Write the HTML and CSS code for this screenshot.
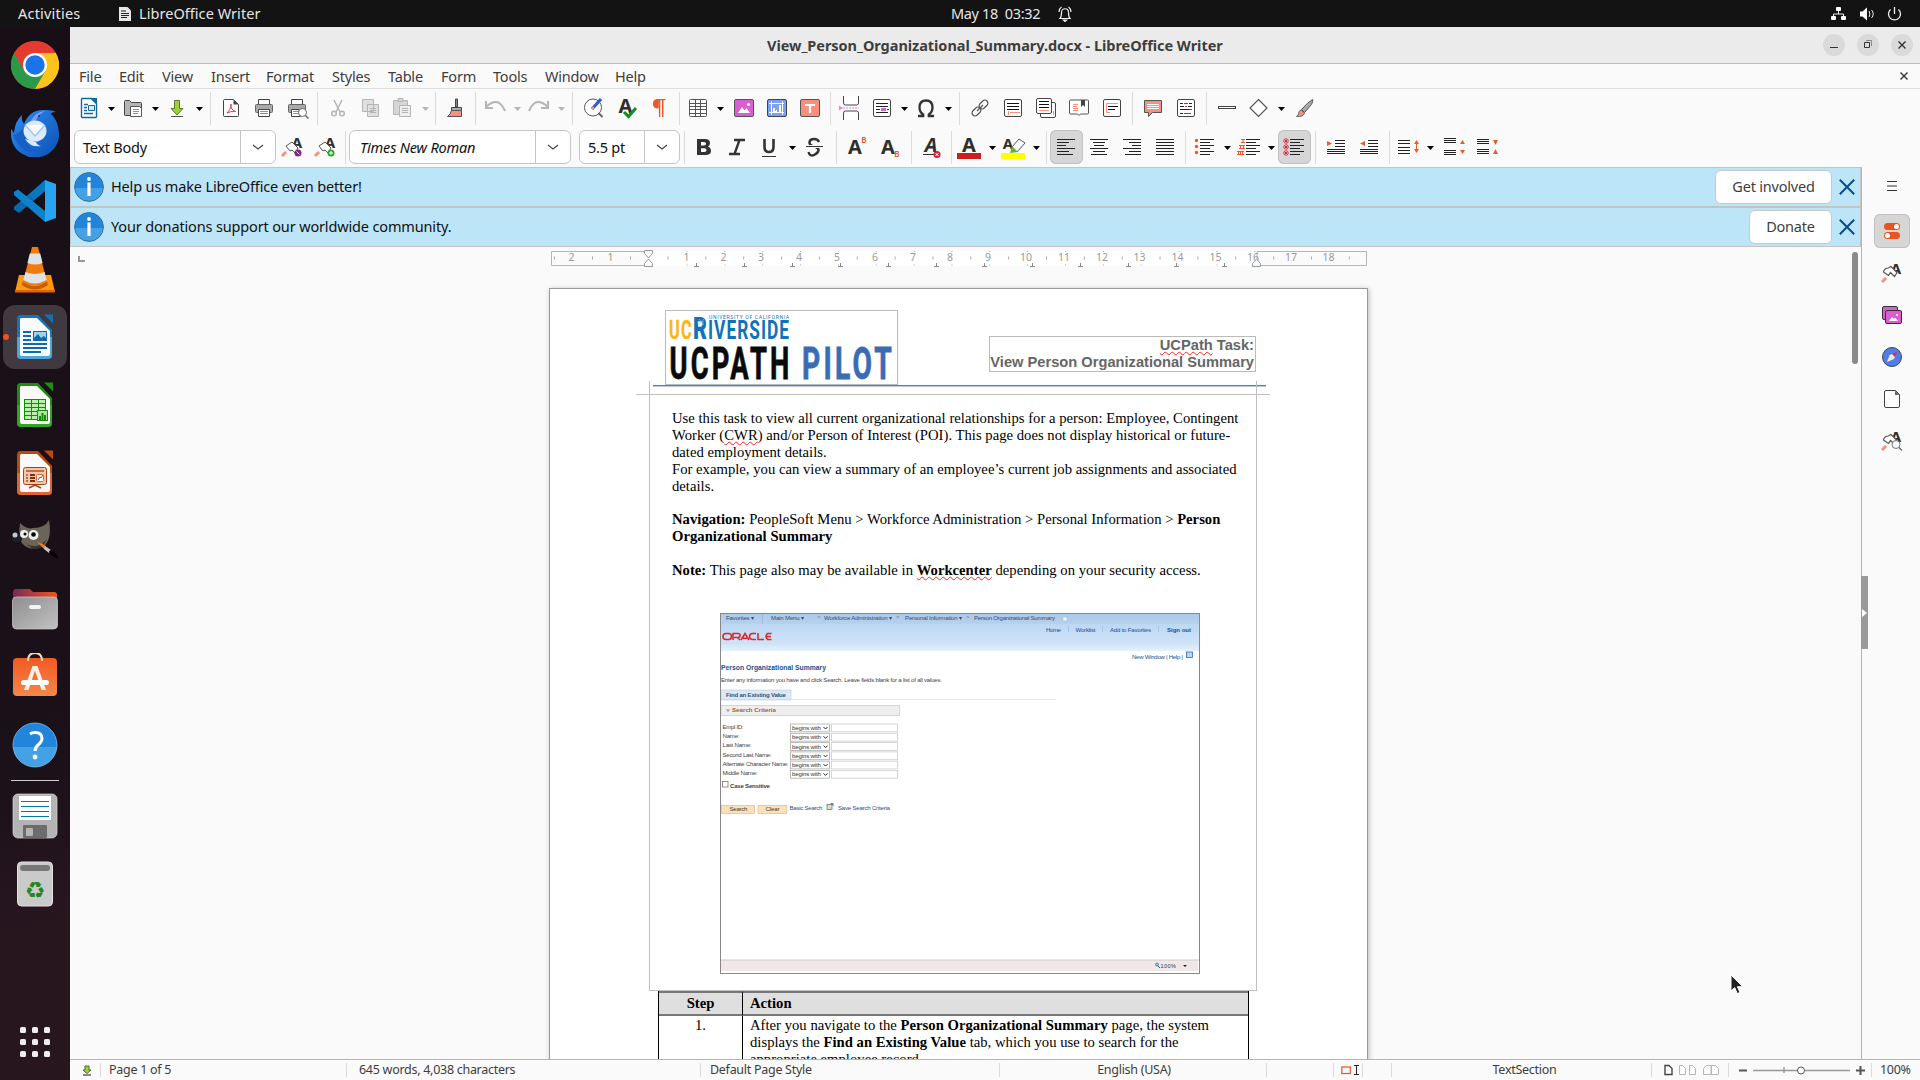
FILE: index.html
```html
<!DOCTYPE html>
<html lang="en">
<head>
<meta charset="utf-8">
<title>View_Person_Organizational_Summary.docx - LibreOffice Writer</title>
<link rel="stylesheet" href="styles.css">
</head>
<body>
<header class="topbar">
  <span class="activities">Activities</span>
  <svg class="app-glyph" width="12" height="14" viewBox="0 0 12 14"><path d="M0 0h8.500l3.500 3.500V14H0z" fill="#e8e8e8"/><path d="M2 4h5M2 6.500h8M2 8.500h8M2 10.500h6" stroke="#222" stroke-width="1"/></svg>
  <span class="appname">LibreOffice Writer</span>
  <span class="clock">May 18&nbsp; 03:32</span>
  <svg class="bell" width="14" height="16" viewBox="0 0 14 16" fill="none" stroke="#eee" stroke-width="1.200"><path d="M2 12.500c1.500-1.500 1.500-3 1.500-6 0-5 7-5 7 0 0 3 0 4.500 1.500 6zM1 6q.2-3.500 2.500-5M13 6Q12.800 2.500 10.500 1"/><path d="M5.500 14h3l-1.500 1.500z" fill="#fff"/></svg>
  <svg class="tray" width="74" height="16" viewBox="0 0 74 16"><g fill="#fff"><rect x="5" y="1" width="5" height="4" rx="1"/><rect x="0" y="10" width="5" height="4" rx="1"/><rect x="10" y="10" width="5" height="4" rx="1"/><path d="M29 5.500h2.500L36 1.500v13l-4.500-4H29z"/></g><path d="M7.500 5v3M2.500 10V8h10v2M38 5q2 3 0 6M40.500 4q3.500 4 0 8" fill="none" stroke="#eee"/><path d="M59.500 3.500a6 6 0 1 0 8 0M63.500 1v7" fill="none" stroke="#eee" stroke-width="1.300"/></svg>
</header>
<div class="desktop">
<nav class="dock">
  <div class="app"><svg viewBox="0 0 48 48"><circle cx="24" cy="24" r="24" fill="#e33b2e"/><path d="M3.200 12A24 24 0 0 0 24 48L34.500 30 24 24 13.500 30z" fill="#2a9a48"/><path d="M24 48A24 24 0 0 0 44.800 12H24L34.500 30z" fill="#fcc31c"/><path d="M3.200 12 13.500 30 24 24 24 12H44.800A24 24 0 0 0 3.200 12z" fill="#e33b2e"/><circle cx="24" cy="24" r="12" fill="#fff"/><circle cx="24" cy="24" r="9.700" fill="#1a73e8"/></svg></div>
  <div class="app"><svg viewBox="0 0 48 48"><defs><linearGradient id="tb" x1="0" y1="0" x2="1" y2="1"><stop offset="0" stop-color="#2f8df0"/><stop offset="1" stop-color="#0b50b4"/></linearGradient></defs><path d="M0 20l3 4Q4 12 11 6q-1 6 2 9Q19 0 33 1q8-.5 12 2-5 0-5 2 7 6 8 19a24 23 0 0 1-48 3z" fill="url(#tb)"/><path d="M20 12Q24 3 34 2q-6 3-9 9l-6 4z" fill="#7f9cf5"/><path d="M2 26q6-1 12-9l4-3q-6 10-3 18t14 11Q10 46 2 26z" fill="#1560c8"/><ellipse cx="24" cy="22" rx="11.500" ry="10.500" fill="#dceafd"/><path d="M14 16l10 11 10-11" fill="#f6faff" stroke="#9ec7f5" stroke-width="1.500"/><path d="M14 30q6 9 16 7-4-1-5-4z" fill="#d7eaff"/><circle cx="28" cy="7" r="1" fill="#0b3b80"/></svg></div>
  <div class="app"><svg viewBox="0 0 48 48"><path d="M34 3v11L8 36l-5-3.500V30z" fill="#0a6ab0"/><path d="M3 15l4-2.500L34 34v11L3 18z" fill="#0f80cc"/><path d="M34 3l11 4v34l-11 4z" fill="#27a5f2"/><path d="M34 3v11l-11 9-5-5z" fill="#0877bd"/></svg></div>
  <div class="app"><svg viewBox="0 0 48 48"><path d="M8 30h32l4 17H4z" fill="#ff9a0c"/><path d="M4 45h40v2.500H4z" fill="#e06500"/><path d="M12 36q12 10 24 0l1 4q-13 9-26 0z" fill="#c85c00"/><path d="M21 2h6l9 35q-12 7-24 0z" fill="#f07c0c"/><path d="M18.800 8.500h10.400l2.400 9.500q-7.600 3-15.200 0zM14.500 27q9.500 4 19 0l2.200 8q-11.700 7-23.400 0z" fill="#dfe3e6"/></svg></div>
  <div class="app active"><svg viewBox="0 0 48 48"><path d="M9.500 2H27l14 15v25a4 4 0 0 1-4 4H10a4 4 0 0 1-4-4V6q0-4 3.500-4z" fill="#1874b6"/><path d="M6 24h35v18a4 4 0 0 1-4 4H10a4 4 0 0 1-4-4z" fill="#4ba8da"/><path d="M10 5h16l13 13v23q0 2-2 2H11q-2 0-2-2V6z" fill="#fafafa"/><path d="M33 1.500h9v9z" fill="#1170ad"/><path d="M12 19h8M12 23h8M12 27h8M12 31h24M12 35h24M12 39h18" stroke="#0a6ab4" stroke-width="2"/><rect x="22.500" y="18.500" width="13" height="9" fill="#9ed2f2" stroke="#0a6ab4"/><path d="M23 27v-2l4-4 3 4 3-2 2 2v2z" fill="#0a6ab4"/></svg></div>
  <div class="app"><svg viewBox="0 0 48 48"><path d="M9.500 2H27l14 15v25a4 4 0 0 1-4 4H10a4 4 0 0 1-4-4V6q0-4 3.500-4z" fill="#238a16"/><path d="M6 24h35v18a4 4 0 0 1-4 4H10a4 4 0 0 1-4-4z" fill="#34a522"/><path d="M10 5h16l13 13v23q0 2-2 2H11q-2 0-2-2V6z" fill="#fafafa"/><path d="M33 1.500h9v9z" fill="#238a16"/><rect x="13.500" y="18.500" width="21" height="20" fill="#b8efad" stroke="#168a0c"/><path d="M13 22.500h22M13 26.500h22M13 30.500h22M13 34.500h22M20.500 18v21M27.500 18v21" stroke="#168a0c"/><rect x="26.500" y="29.500" width="10" height="10" fill="#a8e79c" stroke="#168a0c"/><path d="M29 39v-4M31.500 39v-7M34 39v-5" stroke="#168a0c" stroke-width="2"/></svg></div>
  <div class="app"><svg viewBox="0 0 48 48"><path d="M9.500 2H27l14 15v25a4 4 0 0 1-4 4H10a4 4 0 0 1-4-4V6q0-4 3.500-4z" fill="#b94a10"/><path d="M6 24h35v18a4 4 0 0 1-4 4H10a4 4 0 0 1-4-4z" fill="#e0672c"/><path d="M10 5h16l13 13v23q0 2-2 2H11q-2 0-2-2V6z" fill="#fafafa"/><path d="M33 1.500h9v9z" fill="#b94a10"/><rect x="12.500" y="18.500" width="23" height="17" rx="2" fill="#edc9b5" stroke="#a84412"/><path d="M15 22h18" stroke="#d8672c" stroke-width="2"/><path d="M19 26h5M19 29h5M19 32h5" stroke="#7b2d06" stroke-width="2"/><path d="M15 26h2M15 29h2M15 32h2" stroke="#d8672c" stroke-width="2"/><rect x="25.500" y="25.500" width="7" height="7" rx="1" fill="#fff" stroke="#e0672c"/><path d="M27 31l2-3 1 1 2-3" fill="none" stroke="#a84412"/><path d="M18 39l6-3 6 3" fill="none" stroke="#a84412" stroke-width="1.500"/></svg></div>
  <div class="app"><svg viewBox="0 0 48 48"><path d="M9 6q7 7 13 5Q34 11 38 3q3 18-4 25-7 5-16 3-9-3-10-13z" fill="#6b6559"/><path d="M14 26q12 8 22-4-4 10-14 10z" fill="#37342e"/><ellipse cx="5.500" cy="20.500" rx="5.500" ry="6" fill="#1c2024" stroke="#000" stroke-width=".5"/><circle cx="4" cy="18" r="2.500" fill="#c2c8cc"/><circle cx="13" cy="17" r="4" fill="#eee"/><circle cx="22.500" cy="18" r="5" fill="#eee"/><circle cx="14" cy="17" r="1.500"/><circle cx="22.500" cy="17.500" r="2.300"/><path d="M26 25q5 1 9 4l-2 3z" fill="#e18120"/><path d="M34 29l6 4-2 3-5-4z" fill="#c6c6c6"/><path d="M39 33q6 2 8 8-7-1-9-6z" fill="#000"/></svg></div>
  <div class="app"><svg viewBox="0 0 48 48"><defs><linearGradient id="fo"><stop offset="0" stop-color="#7b2a57"/><stop offset="1" stop-color="#ed5622"/></linearGradient><linearGradient id="gr" x1="0" y1="0" x2="1" y2="1"><stop offset="0" stop-color="#8e8e8e"/><stop offset="1" stop-color="#c2c2c2"/></linearGradient></defs><path d="M2 8q0-4 3-4h14l3 3h21q3 0 3 3v12H2z" fill="url(#fo)"/><rect x="1.500" y="12" width="45" height="32" rx="4" fill="url(#gr)" stroke="#d0d0d0" stroke-width=".7"/><rect x="18" y="20" width="12" height="4" rx="2" fill="#f4f4f4"/></svg></div>
  <div class="app"><svg viewBox="0 0 48 48"><defs><linearGradient id="so" x1="0" y1="0" x2="0" y2="1"><stop offset="0" stop-color="#f15a22"/><stop offset="1" stop-color="#f5874a"/></linearGradient></defs><rect x="2" y="5" width="44" height="38" rx="4" fill="url(#so)"/><path d="M17 8q0-8 7-8t7 8" fill="none" stroke="#f7dfba" stroke-width="2"/><path d="M13 37l8.500-24h5L35 37h-4.500L24 17.500 17.500 37z" fill="#fff0e6"/><rect x="10" y="27" width="28" height="5" rx="2.500" fill="#fff"/></svg></div>
  <div class="app"><svg viewBox="0 0 48 48"><defs><linearGradient id="he" x1="0" y1="0" x2="0" y2="1"><stop offset=".54" stop-color="#2285dc"/><stop offset=".55" stop-color="#43a2e6"/></linearGradient></defs><circle cx="24" cy="24" r="22" fill="url(#he)" stroke="#7fc0ee" stroke-width=".8"/><path d="M19 13q2-1.500 5-1.500 7 0 7 6 0 3-4 6.500-3 2.500-3 6" fill="none" stroke="#fff" stroke-width="3"/><circle cx="24" cy="36" r="2.400" fill="#fff"/></svg></div>
  <div class="dock-line"></div>
  <div class="app"><svg viewBox="0 0 48 48"><rect x="2" y="2" width="44" height="44" rx="5" fill="#b4b4b4" stroke="#d8d8d8" stroke-width=".7"/><path d="M8 4h32v24H8z" fill="#fff"/><path d="M10 9.500h28M10 14.500h28M10 19.500h28M10 24.500h28" stroke="#007aa0"/><rect x="12" y="33" width="24" height="13" rx="1" fill="#6c6c6c"/><rect x="15" y="36" width="7" height="8" rx="1" fill="#b5b5b5"/></svg></div>
  <div class="app"><svg viewBox="0 0 48 48"><rect x="6.500" y="2" width="35" height="44" rx="4" fill="#cacaca" stroke="#e2e2e2"/><rect x="9" y="5" width="30" height="6" rx="3" fill="#777"/><text x="24" y="38" font-size="23" text-anchor="middle" fill="#25861c" font-family="DejaVu Sans">♻</text></svg></div>
  <div class="apps-grid"><i></i><i></i><i></i><i></i><i></i><i></i><i></i><i></i><i></i></div>
</nav>
<main class="window">
  <div class="titlebar">
    <span class="title">View_Person_Organizational_Summary.docx - LibreOffice Writer</span>
    <div class="winbtns">
      <svg viewBox="0 0 22 22"><path d="M7 13.500h8" stroke="#333" fill="none"/></svg>
      <svg viewBox="0 0 22 22"><path d="M7.500 8.500h5v5h-5z" stroke="#333" fill="none"/><path d="M9 6.500h5.500V12" stroke="#888" fill="none"/></svg>
      <svg viewBox="0 0 22 22"><path d="M7.500 7.500l7 7M14.500 7.500l-7 7" stroke="#333" fill="none" stroke-width="1.400"/></svg>
    </div>
  </div>
  <div class="menubar"><span>File</span><span>Edit</span><span>View</span><span>Insert</span><span>Format</span><span>Styles</span><span>Table</span><span>Form</span><span>Tools</span><span>Window</span><span>Help</span>
    <svg class="closedoc" width="8" height="8" viewBox="0 0 8 8"><path d="M.5.5l7 7M7.500.5l-7 7" stroke="#333" stroke-width="1.400"/></svg></div>
  <div class="toolbar one">
    <span class="b"><svg><path d="M4.500 3.500q0-1 1-1h9l5 5v13q0 1-1 1h-13q-1 0-1-1z" fill="#fff" stroke="#0f68a0" stroke-width="1.400"/><path d="M13 2h7v7z" fill="#0f68a0"/><path d="M7 8.500h4M7 11.500h3M7 14.500h3M7 17.500h9" stroke="#0f68a0" stroke-width="1.300"/><path d="M11.500 9.500h6v5h-6z" fill="#d5eaf8" stroke="#0f68a0"/></svg></span><i class="d"></i>
    <span class="b"><svg><path d="M3.500 19V5.500q0-1 1-1h4l2 2h9q1 0 1 1V19q0 .500-1 .500h-15q-1 0-1-.500z" fill="#b5b5b5" stroke="#444"/><path d="M9.500 10.500h9l2 2v8h-11z" fill="#fff" stroke="#555"/><path d="M12 13.500h6M12 15.500h6M12 17.500h5" stroke="#8a88e0"/></svg></span><i class="d"></i>
    <span class="b"><svg><path d="M9.500 4.500h5v8h3.500L12 19l-6-6.500h3.500z" fill="#9cd13a" stroke="#5d7a2e"/><path d="M6 20.500h12" stroke="#555"/></svg></span><i class="d"></i>
    <i class="s s10"></i>
    <span class="b"><svg><path d="M4.500 4.500q0-1 1-1h9l5 5v11q0 1-1 1h-13q-1 0-1-1z" fill="#fff" stroke="#444"/><path d="M14.500 3.500l5 5h-5z" fill="#444"/><path d="M8 17q4-3 4-9-.500 6 4.500 7.500-5-.500-8.500 1.500z" fill="none" stroke="#e03a5c"/></svg></span>
    <span class="b"><svg><path d="M6.500 8V3.500h11V8" fill="#fff" stroke="#444"/><rect x="3.500" y="8.500" width="17" height="8" rx="1" fill="#aaa" stroke="#666"/><path d="M6.500 13.500h11v7h-11z" fill="#fff" stroke="#444"/><path d="M8 15.500h8M8 17.500h8" stroke="#8a88e0"/></svg></span>
    <span class="b"><svg><path d="M6.500 8V3.500h11V8" fill="#fff" stroke="#444"/><rect x="3.500" y="8.500" width="17" height="8" rx="1" fill="#aaa" stroke="#666"/><path d="M6.500 13.500h9v7h-9z" fill="#fff" stroke="#444"/><path d="M8 15.500h7M8 17.500h7" stroke="#8a88e0"/><circle cx="17.500" cy="16.500" r="4" fill="#fff" stroke="#666"/><path d="M20.500 19.500l3 3" stroke="#666" stroke-width="1.500"/></svg></span>
    <i class="s s7"></i>
    <span class="b"><svg fill="none" stroke="#b5b5b5" stroke-width="1.500"><path d="M9 4l6 12M17 4l-6 12"/><circle cx="9" cy="17.500" r="2.300"/><circle cx="17" cy="17.500" r="2.300"/></svg></span>
    <span class="b"><svg fill="#e0e0e0" stroke="#b5b5b5"><path d="M4.500 3.500h11v12h-11zM9.500 8.500h11v12h-11z"/><path d="M12 12.500h6M12 14.500h6M12 16.500h6"/></svg></span>
    <span class="b"><svg fill="#d5d5d5" stroke="#b5b5b5"><path d="M2.500 4.500h14v14h-14z"/><path d="M7 2.500h5v3H7z"/><path fill="#eee" d="M8.500 9.500h11v11h-11z"/><path d="M11 12.500h6M11 14.500h6M11 16.500h6"/></svg></span><i class="d off"></i>
    <i class="s s8"></i>
    <span class="b"><svg><path d="M12.500 3h2v8h-2z" fill="#888" stroke="#444"/><path d="M8.500 11.500h10v3h-10z" fill="#aaa" stroke="#444"/><path d="M8.500 14.500h10v6h-14q3-2 4-6z" fill="#fa9080" stroke="#555"/></svg></span>
    <i class="s s7"></i>
    <span class="b"><svg fill="none" stroke="#b5b5b5" stroke-width="2"><path d="M3 5v7h7"/><path d="M3 11q5-5 10-5t9 9"/></svg></span><i class="d off"></i>
    <span class="b"><svg fill="none" stroke="#b5b5b5" stroke-width="2"><path d="M21 5v7h-7"/><path d="M21 11q-5-5-10-5T2 15"/></svg></span><i class="d off"></i>
    <i class="s s10"></i>
    <span class="b"><svg fill="none"><circle cx="12" cy="11.500" r="8.500" stroke="#555" fill="#fff"/><path d="M17.500 17l4 4" stroke="#666" stroke-width="2"/><path d="M20 3l-9 10" stroke="#2b5cd8" stroke-width="3.200"/><path d="M11 13l1.500-2" stroke="#f0a060" stroke-width="2.500"/></svg></span>
    <span class="b"><svg><text x="11.500" y="16.500" class="gl" font-size="20">A</text><path d="M10 16l4.500 4.500L22 12" fill="none" stroke="#158a28" stroke-width="3"/></svg></span>
    <span class="b"><svg><path d="M11.500 3v9.500h-1.500a4.800 4.800 0 0 1 0-9.500h8.500v1.200h-2V21H15V4.200h-1.700V21h-1.300z" fill="#ea5b2c"/></svg></span>
    <i class="s s6"></i>
    <span class="b"><svg fill="#fff" stroke="#555"><rect x="3.500" y="3.500" width="17" height="17" rx="1"/><path d="M3 7.500h18M3 10.500h18M3 13.500h18M3 17.500h18M9.500 3v18M14.500 3v18"/></svg></span><i class="d d13"></i>
    <span class="b"><svg><rect x="2.500" y="3.500" width="19" height="17" rx="1.500" fill="#d95fd0" stroke="#555"/><path d="M6 17l4-6 2.500 3.500L14.500 12l3.500 5z" fill="#fff"/><circle cx="16.500" cy="8.500" r="1.600" fill="#fff"/></svg></span>
    <span class="b"><svg><rect x="2.500" y="3.500" width="19" height="17" rx="1.500" fill="#7ca0f5" stroke="#444"/><path d="M6.500 5.500v13M4 16.500h15M4 7.500h15M17.500 5.500v13" stroke="#fff" fill="none"/><path d="M8 16v-4h2v3h1v-1h1v2M14 16V9h2v7" fill="#fff"/></svg></span>
    <span class="b"><svg><rect x="2.500" y="3.500" width="19" height="17" rx="1.500" fill="#fb8f7c" stroke="#555"/><path d="M7 9h10M12 9v8" stroke="#fff" stroke-width="2.200"/></svg></span>
    <i class="s s6"></i>
    <span class="b"><svg fill="#fff" stroke="#444"><path d="M6.500 0v7q0 2 2 2h11q2 0 2-2V0M6.500 24v-7q0-2 2-2h11q2 0 2 2v7"/><path d="M6 12h16" stroke="#f080c8" stroke-dasharray="2 1"/><path d="M2 9.500v5l4-2.500z" fill="#f080c8" stroke="none"/></svg></span>
    <span class="b"><svg><rect x="3.500" y="3.500" width="17" height="17" rx="1.500" fill="#fff" stroke="#444"/><path d="M6 7.500h12M6 10.500h12M6 13.500h4M17 13.500h2M6 16.500h12" stroke="#222"/><path d="M11 12h5v3h-5z" fill="#d95fd0"/></svg></span><i class="d"></i>
    <span class="b"><svg><path d="M4 20h5.200v-1.500Q5.500 16 5.500 11.500 5.500 4.500 12 4.500t6.500 7q0 4.500-3.700 7V20H20" fill="none" stroke="#333" stroke-width="2.300"/></svg></span><i class="d"></i>
    <i class="s s10"></i>
    <span class="b"><svg fill="none" stroke="#555" stroke-width="1.200"><rect x="-5" y="-3" width="10" height="6" rx="3" transform="translate(8.500 15.500) rotate(-45)"/><rect x="-5" y="-3" width="10" height="6" rx="3" transform="translate(15.500 8.500) rotate(-45)"/><path d="M9 15l6-6"/></svg></span>
    <span class="b"><svg><rect x="3.500" y="3.500" width="17" height="17" rx="1.500" fill="#fff" stroke="#444"/><path d="M6 7.500h12M6 10.500h12M6 13.500h12" stroke="#111"/><path d="M9 16.500h10M7.500 15v4" stroke="#fb8f7c"/></svg></span>
    <span class="b"><svg><rect x="6.500" y="6.500" width="15" height="15" rx="1.500" fill="#fff" stroke="#444"/><rect x="2.500" y="2.500" width="15" height="15" rx="1.500" fill="#fff" stroke="#444"/><path d="M5 5.500h10M5 8.500h10M5 11.500h10" stroke="#111"/><path d="M5 14.500h10M19.500 15v4" stroke="#fb8f7c"/></svg></span>
    <span class="b"><svg><path d="M2.500 5q0-1 1-1h17q1 0 1 1v12q0 1-1 1h-7L12 19.500 10.500 18h-7q-1 0-1-1z" fill="#fff" stroke="#555"/><path d="M14 4h4v7l-2-2-2 2z" fill="#444"/><path d="M6 8.500h5M6 10.500h4M6 12.500h5M6 14.500h5" stroke="#fb8f7c"/></svg></span>
    <span class="b"><svg><rect x="3.500" y="3.500" width="17" height="17" rx="1.500" fill="#fff" stroke="#444"/><path d="M8 10.500h10M8 13.500h7" stroke="#111"/><path d="M18 7.500H6.500v9H10" fill="none" stroke="#fb8f7c"/></svg></span>
    <i class="s s7"></i>
    <span class="b"><svg><path d="M4.500 4.500h17v12h-9l-4 4v-4h-4z" fill="#fb8f7c" stroke="#555"/><path d="M7 8.500h12M7 10.500h12M7 12.500h12" stroke="#fff"/></svg></span>
    <span class="b"><svg><rect x="4.500" y="3.500" width="17" height="17" rx="1.500" fill="#fff" stroke="#444"/><path d="M7 7.500h3M16 7.500h3M7 10.500h4M15 10.500h4M7 13.500h9M7 17.500h3" stroke="#222"/><path d="M11 7.500h4M12 10.500h2M16 13.500h3M11 17.500h7" stroke="#d42040"/></svg></span>
    <i class="s s8"></i>
    <span class="b"><svg><rect x="4.500" y="10.500" width="17" height="2" fill="#fff" stroke="#444"/></svg></span>
    <span class="b"><svg><path d="M11.500 3.500l8.500 8.500-8.500 8.500L3 12z" fill="#fff" stroke="#555" stroke-width="1.200"/></svg></span><i class="d"></i>
    <span class="b"><svg><path d="M21.500 3.500q1 1-1 5l-7 8-3-3q6-7 11-10z" fill="#aaa" stroke="#555"/><path d="M10 14l3.500 3q-1 4-8 3.500 2-1 2-3 .500-3 2.500-3.500z" fill="#fb8f7c" stroke="#666"/></svg></span>
  </div>
  <div class="toolbar two">
    <div class="combo c1"><span>Text Body</span><b><svg viewBox="0 0 12 6"><path d="M1 1l5 4 5-4"/></svg></b></div>
    <span class="b"><svg><text x="17" y="13" class="gl" font-size="15">A</text><path d="M6 11l6-4 6 6-3 5-3-3-2 1z" fill="#fff" stroke="#555"/><path d="M2 21l4-4" stroke="#fb8f7c" stroke-width="3"/><circle cx="18" cy="18" r="3.500" fill="#7b2a80"/><path d="M16.500 16.500l3 3" stroke="#fff"/></svg></span>
    <span class="b"><svg><text x="17" y="13" class="gl" font-size="15">A</text><path d="M6 11l6-4 6 6-3 5-3-3-2 1z" fill="#fff" stroke="#555"/><path d="M2 21l4-4" stroke="#fb8f7c" stroke-width="3"/><circle cx="18" cy="18" r="3.500" fill="#2da22d"/><path d="M18 16v4M16 18h4" stroke="#fff"/></svg></span>
    <i class="s s7"></i>
    <div class="combo c2"><span>Times New Roman</span><b><svg viewBox="0 0 12 6"><path d="M1 1l5 4 5-4"/></svg></b></div>
    <div class="combo c3"><span>5.5 pt</span><b><svg viewBox="0 0 12 6"><path d="M1 1l5 4 5-4"/></svg></b></div>
    <i class="s s8"></i>
    <span class="b"><svg><path d="M5 4h8q5 0 5 4 0 3-2 3.700 3 .800 3 4.300 0 4-5.500 4H5zm4 3v3.500h3q2 0 2-1.700T12 7zm0 6.300V17h3.500q2 0 2-1.800t-2-1.900z" fill="#333" fill-rule="evenodd"/></svg></span>
    <span class="b"><svg><path d="M9 5h11M4 19h11M14.500 5l-5 14" stroke="#333" stroke-width="2.300" fill="none"/></svg></span>
    <span class="b"><svg><path d="M6.500 4v8q0 5 4.500 5t4.500-5V4" fill="none" stroke="#333" stroke-width="2.600"/><path d="M4 21.500h14" stroke="#333"/></svg></span><i class="d"></i>
    <span class="b"><svg><path d="M17 7q-1-3-5-3t-4.500 3 4.500 4.500 4.500 4T12 20t-5.500-3" fill="none" stroke="#333" stroke-width="2.500"/><path d="M4 11.500h17" stroke="#fafafa" stroke-width="3"/><path d="M4 11.500h17" stroke="#333"/></svg></span>
    <i class="s s10"></i>
    <span class="b"><svg><text x="10" y="19" class="gl" font-size="20">A</text><text x="19" y="8" font-size="8" class="sm">B</text></svg></span>
    <span class="b"><svg><text x="10" y="19" class="gl" font-size="20">A</text><text x="19" y="22" font-size="8" class="sm">B</text></svg></span>
    <i class="s s8"></i>
    <span class="b"><svg><text x="12" y="17" class="gl" font-size="20" font-style="italic">A</text><path d="M4 19.500h11" stroke="#333"/><circle cx="18" cy="19.500" r="3.500" fill="#d0203a"/><path d="M16.500 18l3 3M19.500 18l-3 3" stroke="#fff"/></svg></span>
    <i class="s s6"></i>
    <span class="b"><svg><text x="11" y="17" class="gl" font-size="20">A</text><path d="M-1 18h24v6H-1z" fill="#c9211e"/></svg></span><i class="d"></i>
    <span class="b"><svg><text x="6" y="14" class="gl" font-size="15">A</text><path d="M10 12l7-8 6 4-8 9z" fill="#fff" stroke="#555"/><path d="M10 11l6 6-8 1z" fill="#5cb82e"/><path d="M-1 18h24v6H-1z" fill="#ffff00"/></svg></span><i class="d"></i>
    <i class="s s8"></i>
    <span class="b on"><svg class="ln"><path d="M3 4.500h18M3 7.500h12M3 10.500h9M3 13.500h18M3 16.500h12M3 19.500h16"/></svg></span>
    <span class="b"><svg class="ln"><path d="M3 4.500h18M6 7.500h12M7 10.500h10M3 13.500h18M6 16.500h12M4 19.500h16"/></svg></span>
    <span class="b"><svg class="ln"><path d="M3 4.500h18M9 7.500h12M12 10.500h9M3 13.500h18M9 16.500h12M5 19.500h16"/></svg></span>
    <span class="b"><svg class="ln"><path d="M3 4.500h18M3 7.500h18M3 10.500h18M3 13.500h18M3 16.500h18M3 19.500h18"/></svg></span>
    <i class="s s7"></i>
    <span class="b"><svg class="ln"><path d="M7 4.500h14M7 7.500h10M7 10.500h14M7 13.500h10M7 16.500h14M7 19.500h10"/><g fill="#ea5b2c" stroke="none"><circle cx="3.500" cy="5.500" r="1.700"/><circle cx="3.500" cy="11.500" r="1.700"/><circle cx="3.500" cy="17.500" r="1.700"/></g></svg></span><i class="d"></i>
    <span class="b"><svg class="ln"><path d="M9 4.500h14M9 7.500h10M9 10.500h14M9 13.500h10M9 16.500h14M9 19.500h10"/><path stroke="#ea5b2c" d="M4 4.500h4M6 4v4M4 7.500h4M2 10.500h6M2 13.500h6M3.500 10v4M6.500 10v4M0 16.500h7M0 19.500h7M1.500 16v4M3.500 16v4M5.500 16v4"/></svg></span><i class="d d12"></i>
    <span class="b on"><svg class="ln"><path d="M8 4.500h14M8 7.500h10M8 10.500h14M8 13.500h10M8 16.500h14M8 19.500h10"/><g stroke="#d42040" fill="#fff"><circle cx="4" cy="6" r="2.200"/><circle cx="4" cy="12" r="2.200"/><circle cx="4" cy="18" r="2.200"/><path d="M3 5l2 2M5 5L3 7M3 11l2 2M5 11l-2 2M3 17l2 2M5 17l-2 2"/></g></svg></span>
    <i class="s s9"></i>
    <span class="b"><svg class="ln"><path d="M11 5.500h10M11 8.500h10M11 11.500h10M3 14.500h18M3 16.500h18M3 18.500h18"/><path d="M3 6v5l5-2.500z" fill="#ea5b2c" stroke="none"/></svg></span>
    <span class="b"><svg class="ln"><path d="M11 5.500h10M11 8.500h10M11 11.500h10M3 14.500h18M3 16.500h18M3 18.500h18"/><path d="M8 6v5L3 8.500z" fill="#ea5b2c" stroke="none"/></svg></span>
    <i class="s s6"></i>
    <span class="b"><svg class="ln"><path d="M2 5.500h12M2 8.500h12M2 12.500h12M2 15.500h12M2 18.500h12"/><path d="M20.500 8v8" stroke="#ea5b2c"/><path d="M18 9l2.500-4L23 9zM18 14l2.500 4 2.500-4z" fill="#ea5b2c" stroke="none"/></svg></span><i class="d d12"></i>
    <span class="b"><svg class="ln"><path d="M3 3.500h12M3 5.500h12M3 7.500h12M3 15.500h12M3 17.500h12M3 19.500h12"/><path d="M19 9l2.500-4L24 9zM19 15l2.500 4 2.500-4z" fill="#ea5b2c" stroke="none"/></svg></span>
    <span class="b"><svg class="ln"><path d="M3 4.500h12M3 6.500h12M3 8.500h12M3 14.500h12M3 16.500h12M3 18.500h12"/><path d="M19 5l2.500 5L24 5zM19 19l2.500-5 2.500 5z" fill="#ea5b2c" stroke="none"/></svg></span>
  </div>
  <div class="work">
    <section class="editor">
      <div class="info">
        <svg class="iicon" viewBox="0 0 30 30"><circle cx="15" cy="15" r="14.400" fill="url(#he)" stroke="#3a6f9c"/><circle cx="15" cy="7" r="1.900" fill="#fff"/><path d="M15 10.500v13.500" stroke="#fff" stroke-width="3.200"/></svg>
        <span>Help us make LibreOffice even better!</span><button class="w117">Get involved</button>
        <svg class="ix" viewBox="0 0 16 16"><path d="M0.800 0.800l14.400 14.400M15.200.8L.8 15.200"/></svg>
      </div>
      <div class="info">
        <svg class="iicon" viewBox="0 0 30 30"><circle cx="15" cy="15" r="14.400" fill="url(#he)" stroke="#3a6f9c"/><circle cx="15" cy="7" r="1.900" fill="#fff"/><path d="M15 10.500v13.500" stroke="#fff" stroke-width="3.200"/></svg>
        <span>Your donations support our worldwide community.</span><button class="w83">Donate</button>
        <svg class="ix" viewBox="0 0 16 16"><path d="M0.800 0.800l14.400 14.400M15.200.8L.8 15.200"/></svg>
      </div>
      <div class="canvas">
        <div class="ruler-row">
          <svg class="tabstop" width="8" height="6" viewBox="0 0 8 6"><path d="M1 0v5h6" fill="none" stroke="#999" stroke-width="2"/></svg>
          <svg class="ruler" width="818" height="18" viewBox="0 0 818 18">
            <rect x="98" y="1" width="608" height="15" fill="#fff"/>
            <path d="M98 1.500H.5v14H98M706 1.500h109.500v14H706V1.500" fill="none" stroke="#b5b5b5"/>
            <path d="M98 8H818" stroke="#aaa" stroke-width="3" stroke-dasharray="1 36.850" stroke-dashoffset="-18.500"/>
            <path d="M3.500 6.500v3M41.500 6.500v3M79.500 6.500v3" stroke="#aaa"/>
            <path d="M135.500 1.500H706M135.500 15H706" stroke="#aaa" stroke-dasharray="1 36.850"/>
            <path d="M142 16.500h5M144.500 13v4M190 16.500h5M192.500 13v4M238 16.500h5M240.500 13v4M286 16.500h5M288.500 13v4M334 16.500h5M336.500 13v4M382 16.500h5M384.500 13v4M430 16.500h5M432.500 13v4M478 16.500h5M480.500 13v4M526 16.500h5M528.500 13v4M574 16.500h5M576.500 13v4M622 16.500h5M624.500 13v4M670 16.500h5M672.500 13v4" stroke="#888" transform="translate(1 0)"/>
            <g class="nums"><text x="20.500" y="11">2</text><text x="59.500" y="11">1</text><text x="135.500" y="11">1</text><text x="172.500" y="11">2</text><text x="210" y="11">3</text><text x="248" y="11">4</text><text x="286" y="11">5</text><text x="324" y="11">6</text><text x="362" y="11">7</text><text x="399" y="11">8</text><text x="437" y="11">9</text><text x="475" y="11">10</text><text x="513" y="11">11</text><text x="551" y="11">12</text><text x="588.500" y="11">13</text><text x="626.500" y="11">14</text><text x="664.500" y="11">15</text><text x="702" y="11">16</text><text x="740" y="11">17</text><text x="777.500" y="11">18</text></g>
            <path d="M93.500.500h8v3l-4 4.500-4-4.500zM93.500 16.500h8v-3L97.500 9l-4 4.500zM701.500 16.500h8v-3L705.500 9l-4 4.500z" fill="#fafafa" stroke="#999"/>
          </svg>
        </div>
        <article class="page">
          <div class="page-head">
            <svg class="logo" width="231" height="73" viewBox="0 0 231 73" font-family="Roboto" font-weight="700">
              <g fill="#fdb515" stroke="#fdb515" stroke-width=".3"><text x="3" y="28" font-size="25" letter-spacing="2" textLength="24" lengthAdjust="spacingAndGlyphs">UC</text></g>
              <g fill="#0f72bb"><text x="27" y="28" font-size="32" textLength="14" lengthAdjust="spacingAndGlyphs" font-weight="900">R</text><text x="42" y="28" font-size="25" letter-spacing="1.500" textLength="82" lengthAdjust="spacingAndGlyphs">IVERSIDE</text><text x="43" y="8" font-size="5" font-weight="400" textLength="80">UNIVERSITY OF CALIFORNIA</text></g>
              <text x="3.500" y="68" font-size="43.500" letter-spacing="5" textLength="123" lengthAdjust="spacingAndGlyphs" fill="#0a0a0a" stroke="#0a0a0a" stroke-width=".8">UCPATH</text>
              <text x="136" y="68" font-size="43.500" letter-spacing="5" textLength="93" lengthAdjust="spacingAndGlyphs" fill="#3a6cb5" stroke="#3a6cb5" stroke-width=".8">PILOT</text>
              <path d="M33 8l5 6M33 14l5-6M31 11h7" stroke="#a8cdea" stroke-width=".6"/>
            </svg>
            <div class="task"><p><span class="sp">UCPath</span> Task:</p><p>View Person Organizational Summary</p></div>
          </div>
          <div class="rule"></div>
          <div class="guide"></div>
          <div class="frame">
            <div class="text">
              <p>Use this task to view all current organizational relationships for a person: Employee, Contingent</p>
              <p>Worker (<span class="sp">CWR</span>) and/or Person of Interest (POI). This page does not display historical or future-</p>
              <p>dated employment details.</p>
              <p>For example, you can view a summary of an employee’s current job assignments and associated</p>
              <p>details.</p>
              <p>&nbsp;</p>
              <p><b>Navigation:</b> PeopleSoft Menu &gt; Workforce Administration &gt; Personal Information &gt; <b>Person</b></p>
              <p><b>Organizational Summary</b></p>
              <p>&nbsp;</p>
              <p><b>Note:</b> This page also may be available in <b class="sp">Workcenter</b> depending on your security access.</p>
            </div>
            <svg class="shot" width="480" height="361" viewBox="0 0 480 361" font-family="Liberation Sans" font-size="6.100">
              <defs><linearGradient id="ob" x1="0" y1="0" x2="0" y2="1"><stop offset="0" stop-color="#a9c9ec"/><stop offset=".27" stop-color="#b5d0ee"/><stop offset=".3" stop-color="#bdd8f3"/><stop offset=".8" stop-color="#cfe3f7"/><stop offset="1" stop-color="#e6f1fc"/></linearGradient></defs>
              <rect width="480" height="361" fill="#fff"/><rect width="480" height="38" fill="url(#ob)"/>
              <path d="M42.500 1v10" stroke="#8fb0d3" stroke-width=".6"/>
              <g fill="#3b4a66"><text x="6" y="7" textLength="28">Favorites ▾</text><text x="51" y="7" textLength="33">Main Menu ▾</text><text x="97" y="6" fill="#678">&gt;</text><text x="104" y="7" textLength="68">Workforce Administration ▾</text><text x="176" y="6" fill="#678">&gt;</text><text x="185" y="7" textLength="57">Personal Information ▾</text><text x="246" y="6" fill="#678">&gt;</text><text x="254" y="7" textLength="81">Person Organizational Summary</text></g>
              <rect x="343" y="4" width="4" height="4" fill="#eef5fc" stroke="#9bb8d8" stroke-width=".5"/>
              <g fill="#23508f"><text x="326" y="18.500" textLength="15">Home</text><text x="355.500" y="18.500" textLength="20">Worklist</text><text x="390" y="18.500" textLength="41">Add to Favorites</text><text x="447" y="18.500" textLength="24" font-weight="700">Sign out</text></g>
              <path d="M348.500 13v6M382.500 13v6M438.500 13v6" stroke="#8fb0d3" stroke-width=".6"/>
              <g fill="none" stroke="#e0252b" stroke-width="1.600"><rect x="3" y="20.500" width="8.500" height="6" rx="3"/><path d="M13 27v-6.500h5q2 0 2 2t-2 2h-4M17.500 24.500l2.500 2.500M21 27l4-6.500 4 6.500M23 25.200h4M36 20.500h-3.500a3 3 0 0 0 0 6H36M38 20v6.500h6M51.500 20.500h-4q-1.500 1.500-1.500 3t1.500 3h4M46 23.500h5"/></g>
              <g fill="#23508f"><text x="412" y="45.500" textLength="51">New Window | Help |</text><text x="1" y="57" font-size="6.800" font-weight="700" textLength="105">Person Organizational Summary</text></g>
              <rect x="466.500" y="39" width="6" height="5.500" fill="#bcd4f5" stroke="#3366bb" stroke-width=".8"/>
              <text x="1" y="68.500" fill="#444" textLength="221">Enter any information you have and click Search. Leave fields blank for a list of all values.</text>
              <rect x="1" y="77" width="70" height="10" fill="#dce8f4" stroke="#b9cbe0" stroke-width=".6"/><path d="M1 86.500h335" stroke="#c9d8e8" stroke-width=".6"/><text x="6" y="84" font-weight="700" fill="#3a5478" textLength="60">Find an Existing Value</text>
              <rect x="1" y="92.500" width="178.500" height="10" fill="#efefef" stroke="#ccc" stroke-width=".8"/><path d="M6 96.500h4l-2 2.500z" fill="#999"/><text x="12" y="99" font-weight="700" fill="#a8602a" textLength="44">Search Criteria</text>
              <g fill="#444"><text x="2.500" y="115.500" textLength="21">Empl ID:</text><text x="2.500" y="125" textLength="17">Name:</text><text x="2.500" y="134" textLength="29">Last Name:</text><text x="2.500" y="143.500" textLength="49">Second Last Name:</text><text x="2.500" y="152.500" textLength="66">Alternate Character Name:</text><text x="2.500" y="161.500" textLength="35">Middle Name:</text></g>
              <g fill="#fff" stroke="#aaa" stroke-width=".8"><rect x="70.500" y="111" width="39" height="7.800"/><rect x="70.500" y="120.300" width="39" height="7.800"/><rect x="70.500" y="129.600" width="39" height="7.800"/><rect x="70.500" y="138.900" width="39" height="7.800"/><rect x="70.500" y="148.100" width="39" height="7.800"/><rect x="70.500" y="157.400" width="39" height="7.800"/><g stroke="#ccc"><rect x="111.500" y="111" width="66" height="7.800"/><rect x="111.500" y="120.300" width="66" height="7.800"/><rect x="111.500" y="129.600" width="66" height="7.800"/><rect x="111.500" y="138.900" width="66" height="7.800"/><rect x="111.500" y="148.100" width="66" height="7.800"/><rect x="111.500" y="157.400" width="66" height="7.800"/></g><rect x="2.500" y="168.500" width="5.500" height="5.500" stroke="#777"/></g>
              <g fill="#333"><text x="72" y="117" textLength="29">begins with</text><text x="72" y="126.300" textLength="29">begins with</text><text x="72" y="135.600" textLength="29">begins with</text><text x="72" y="144.900" textLength="29">begins with</text><text x="72" y="154.100" textLength="29">begins with</text><text x="72" y="163.400" textLength="29">begins with</text></g>
              <path d="M103.500 114l2 2 2-2M103.500 123.300l2 2 2-2M103.500 132.600l2 2 2-2M103.500 141.900l2 2 2-2M103.500 151.100l2 2 2-2M103.500 160.400l2 2 2-2" fill="none" stroke="#222"/>
              <text x="10" y="174.500" font-weight="700" fill="#444" textLength="40">Case Sensitive</text>
              <rect x="1.500" y="192.500" width="33" height="8" fill="#fbe0b8" stroke="#e2bd88" stroke-width=".7"/><rect x="38" y="192.500" width="29" height="8" fill="#fbe0b8" stroke="#e2bd88" stroke-width=".7"/>
              <text x="9.500" y="198.300" fill="#443" textLength="18">Search</text><text x="45.500" y="198.300" fill="#443" textLength="14">Clear</text>
              <g fill="#23508f"><text x="69.500" y="196.800" textLength="33">Basic Search</text><text x="118" y="196.800" textLength="52">Save Search Criteria</text></g>
              <rect x="107" y="191.500" width="5" height="5" fill="#e9e2a8" stroke="#46a" stroke-width=".7"/><path d="M110 190h3.500v3.500z" fill="#5583cc"/>
              <rect x="1" y="347" width="477" height="11" fill="#f0e8e8"/><path d="M1 347h478" stroke="#ccc"/><text x="440.500" y="354.500" fill="#333" font-size="5.500" textLength="15.500">100%</text><circle cx="437" cy="351.500" r="1.500" fill="#7cf" stroke="#357" stroke-width=".6"/><path d="M438 353l2 2" stroke="#357"/><path d="M463 352h4l-2 2z" fill="#222"/>
              <rect x=".5" y=".5" width="479" height="360" fill="none" stroke="#888"/>
            </svg>
          </div>
          <table class="steps"><thead><tr><th class="st">Step</th><th>Action</th></tr></thead><tbody><tr><td class="st">1.</td><td><p>After you navigate to the <b>Person Organizational Summary</b> page, the system</p><p>displays the <b>Find an Existing Value</b> tab, which you use to search for the</p><p>appropriate employee record.</p></td></tr></tbody></table>
        </article>
        <div class="vscroll"></div>
      </div>
    </section>
    <aside class="sidebar">
      <span class="handle"></span>
      <span class="sb menu"><svg><path d="M7 7.500h10M7 12h10M7 16.500h10" stroke="#333" stroke-width="1.100"/></svg></span>
      <span class="sb sel"><svg><rect x="4" y="4" width="16" height="7" rx="3.500" fill="#ea5420"/><circle cx="16.500" cy="7.500" r="2.500" fill="#fff"/><rect x="4" y="13" width="16" height="7" rx="3.500" fill="#ea5420"/><circle cx="7.500" cy="16.500" r="2.500" fill="#fff"/></svg></span>
      <span class="sb"><svg><text x="16" y="13" class="gl" font-size="15">A</text><path d="M3.500 11q1-4 5-4l2.500-1.500 6 6-2.500 4-4-4-2 3z" fill="#fff" stroke="#555" stroke-width="1.200"/><path d="M2 21l4-4" stroke="#fb8f7c" stroke-width="3"/></svg></span>
      <span class="sb"><svg><rect x="2.500" y="3.500" width="15" height="13" rx="1.500" fill="#d95fd0" stroke="#333"/><rect x="5.500" y="7.500" width="16" height="13" rx="1.500" fill="#d95fd0" stroke="#333"/><path d="M9 18l3-4 2 2 1-1.500 3 3.500z" fill="#fff"/><circle cx="17" cy="12" r="1" fill="#fff"/></svg></span>
      <span class="sb"><svg><circle cx="12" cy="12" r="9.500" fill="#4f7ee8" stroke="#444"/><path d="M17 7l-3 7-4-4z" fill="#e02848"/><path d="M7 17l2.500-7 2.500-1 3 3-1 2z" fill="#e8e8f4"/></svg></span>
      <span class="sb"><svg><path d="M4.500 5q0-1.500 1.500-1.500h9.500l4 4V19q0 1.500-1.500 1.500H6q-1.500 0-1.500-1.500z" fill="#fff" stroke="#444"/><path d="M15 3.500l4.500 4.500H15z" fill="#666"/></svg></span>
      <span class="sb"><svg><text x="16" y="13" class="gl" font-size="15">A</text><path d="M3.500 11q1-4 5-4l2.500-1.500 6 6-2.500 4-4-4-2 3z" fill="#fff" stroke="#555" stroke-width="1.200"/><path d="M2 21l4-4" stroke="#fb8f7c" stroke-width="3"/><circle cx="16" cy="15.500" r="4" fill="#fafafa" stroke="#777"/><path d="M19 18.500l3 3" stroke="#666" stroke-width="1.300"/></svg></span>
    </aside>
  </div>
  <footer class="status">
    <span class="st0"><svg width="10" height="11" viewBox="0 0 10 11"><path d="M3 1h4v4h2L5 8.500 1 5h2z" fill="#9cd13a" stroke="#4d6a2e"/><path d="M1 10h8" stroke="#555" stroke-width="1.400"/></svg></span>
    <span class="st1">Page 1 of 5</span><span class="st2">645 words, 4,038 characters</span><span class="st3">Default Page Style</span><span class="st4">English (USA)</span><span class="st5"></span>
    <span class="st6"><svg width="18" height="10" viewBox="0 0 18 10"><rect x=".8" y="2" width="8.500" height="6.500" fill="none" stroke="#ea5420" stroke-width="1.200"/><path d="M13 .5h5M13 9.500h5M15.500 0v10" stroke="#222"/></svg></span><span class="st7"></span><span class="st8">TextSection</span>
    <span class="st9"><svg width="58" height="12" viewBox="0 0 58 12" fill="#fff"><path d="M1 1.500h4l3 3v6H1z" stroke="#444" stroke-width="1.400"/><g stroke="#b5b5b5"><path d="M15.500 1.500h3l3 3v6h-6zM25.500 1.500h3l3 3v6h-6zM39.500 10.500v-6l3-3h4.500v9zM47.500 1.500h4l3 3v6h-7z"/></g></svg></span>
    <span class="st10"><svg width="130" height="12" viewBox="0 0 130 12"><path d="M1 6.500h8M118 6.500h9M122.500 2v9" stroke="#555" stroke-width="2"/><path d="M15 6.500h97M46 3v6" stroke="#999" stroke-width="1.500"/><circle cx="63" cy="6.500" r="3.500" fill="#fff" stroke="#555"/></svg></span><span class="st11">100%</span>
  </footer>
</main>
</div>
<svg class="pointer" width="16" height="22" viewBox="0 0 16 22"><path d="M1 1v16l3.700-3.400 2.600 6 2.700-1.200-2.600-5.700h5.300z" fill="#222" stroke="#fff"/></svg>
</body>
</html>
```
FILE: styles.css
```css
* { box-sizing: border-box; }
body { margin: 0; width: 1920px; height: 1080px; overflow: hidden; font: 14.5px/18px "Noto Sans", "Open Sans", sans-serif; color: #3d3d3d; background: #fafafa; display: flex; flex-direction: column; }
p { margin: 0; white-space: nowrap; }
svg { display: block; flex: none; }

.topbar { height: 27px; flex: none; background: #131313; color: #e6e6e6; display: flex; align-items: center; }
.topbar span { padding-bottom: 2px; }
.activities { width: 101px; padding-left: 18px; letter-spacing: .2px; }
.app-glyph { margin: 0 8px 0 18px; }
.appname { width: 812px; letter-spacing: .05px; white-space: nowrap; }
.clock { width: 107px; letter-spacing: -.35px; white-space: nowrap; }
.tray { margin-left: auto; margin-right: 15px; }

.desktop { flex: 1; display: flex; min-height: 0; }
.dock { width: 70px; flex: none; background: linear-gradient(165deg, #180e15 0, #1b1118 70%, #28161f 85%); padding-top: 4px; display: flex; flex-direction: column; align-items: center; }
.app { width: 64px; height: 64px; margin: 2px 0; flex: none; display: grid; place-items: center; border-radius: 12px; position: relative; }
.app svg { width: 48px; height: 48px; }
.app.active { background: #403a40; }
.app.active::before { content: ""; position: absolute; left: 0; top: 29px; width: 6px; height: 6px; border-radius: 3px; background: #e95420; }
.dock-line { width: 48px; height: 3px; flex: none; border: solid transparent; border-width: 1px 0; background: #ccc content-box; }
.apps-grid { margin-top: auto; margin-bottom: 23px; display: grid; grid-template-columns: repeat(3, 6px); gap: 6px; }
.apps-grid i { height: 6px; background: #eee; border-radius: 1.500px; }

.window { flex: 1; display: flex; flex-direction: column; min-width: 0; }
.titlebar { height: 37px; flex: none; background: #ebebeb; border-bottom: 1px solid #bdbdbd; display: flex; align-items: center; padding-left: 697px; }
.title { width: 460px; font-weight: 700; letter-spacing: -.04px; white-space: nowrap; }
.winbtns { margin-left: auto; display: flex; gap: 12px; padding-right: 7px; }
.winbtns svg { width: 22px; height: 22px; border-radius: 11px; background: #dadada; }
.menubar { height: 25px; flex: none; border-bottom: 1px solid #dfdfdf; display: grid; grid-template-columns: 40px 43px 49px 55px 66px 56px 53px 52px 52px 70px 1fr auto; align-items: center; padding: 0 12px 0 9px; letter-spacing: -.2px; }

.toolbar { display: flex; align-items: center; flex: none; }
.toolbar.one { height: 38px; padding-left: 3px; }
.toolbar.two { height: 40px; padding-left: 4px; }
.b { width: 33px; height: 34px; flex: none; display: flex; align-items: center; padding-left: 4px; }
.b svg { width: 24px; height: 24px; overflow: visible; }
.b.on { background: #d6d6d6; box-shadow: inset 0 0 0 1px #c2c2c2; border-radius: 6px; }
.gl { font-family: "Noto Sans"; font-weight: 700; fill: #2e2e2e; text-anchor: middle; }
.sm { font-family: "Noto Sans"; font-weight: 600; fill: #ea5420; text-anchor: middle; }
.ln { fill: none; stroke: #222; }
.d { width: 11px; flex: none; height: 4px; background: #000; clip-path: polygon(2px 0, 9px 0, 5.500px 4px); margin-top: 2px; }
.d.off { background: #b5b5b5; }
.d12 { width: 12px; }
.d13 { width: 13px; }
.s { height: 33px; flex: none; background: linear-gradient(#dcdcdc, #dcdcdc) 50% 0 / 1px 100% no-repeat; }
.s6 { width: 6px; } .s7 { width: 7px; } .s8 { width: 8px; } .s9 { width: 9px; } .s10 { width: 10px; }
.combo { height: 34px; flex: none; border: 1px solid #c6c6c6; border-radius: 6px; background: #fff; display: flex; align-items: center; color: #111; }
.combo span { flex: 1; padding: 0 0 1px 8px; letter-spacing: -.25px; white-space: nowrap; }
.combo b { width: 35px; height: 100%; border-left: 1px solid #c6c6c6; display: grid; place-items: center; }
.combo b svg { width: 12px; height: 6px; fill: none; stroke: #444; stroke-width: 1.200; }
.c1 { width: 202px; }
.c2 { width: 222px; margin-right: 8px; font-style: italic; }
.c2 span { padding-left: 10px; letter-spacing: -.2px; }
.c3 { width: 101px; }

.work { flex: 1; display: flex; min-height: 0; }
.editor { width: 1792px; flex: none; display: flex; flex-direction: column; border-right: 1px solid #b4b4b4; }
.info { height: 40px; flex: none; background: #bde5f8; border: 1px solid #c4c4c4; display: flex; align-items: center; padding: 0 5px 0 3px; color: #111; }
.iicon { width: 30px; height: 30px; }
.info span { margin-left: 7px; padding-bottom: 2px; letter-spacing: -.15px; }
.info button { margin-left: auto; height: 34px; border: 1px solid #c9c9c9; border-radius: 6px; background: #fff; font: inherit; color: #3d3d3d; letter-spacing: -.2px; padding: 0 0 2px; }
.w117 { width: 117px; } .w83 { width: 83px; }
.ix { width: 16px; height: 16px; margin-left: 7px; fill: none; stroke: #0a4b8c; stroke-width: 2; }

.canvas { flex: 1; min-height: 0; overflow: hidden; position: relative; }
.ruler-row { display: flex; height: 41px; padding: 3px 0 0 8px; }
.tabstop { margin-top: 6px; }
.ruler { margin-left: 465px; }
.nums { font: 10.500px "Noto Sans", sans-serif; fill: #999; text-anchor: middle; }
.page { margin-left: 479px; width: 819px; height: 1100px; background: #fff; border: 1px solid #999; box-shadow: 1px 1px 5px #bbb; color: #000; }
.page-head { height: 96px; padding: 21px 111px 0 115px; display: flex; justify-content: space-between; align-items: flex-start; }
.logo { border: 1px solid #bbb; width: 233px; height: 75px; }
.task { margin-top: 26px; width: 267px; height: 36px; border: 1px solid #bbb; font: bold 14.667px/17px "Liberation Sans", Arial, sans-serif; color: #666; text-align: right; padding-right: 1px; }
.rule { margin-left: 103px; width: 613px; height: 2px; background: linear-gradient(#4f81bd 50%, #b8cce8 50%); }
.guide { margin: 7px 0 0 86px; width: 634px; height: 1px; background: #c0c0c0; }
.frame { position: relative; margin-left: 99px; width: 608px; height: 596px; border: solid #c0c0c0; border-width: 0 1px 1px; }
.frame::before, .frame::after { content: ""; position: absolute; top: -14px; width: 1px; height: 14px; background: #c0c0c0; }
.frame::before { left: -1px; }
.frame::after { right: -1px; }
.text { height: 218px; padding: 15px 0 0 22px; font: 14.667px/16.880px "Liberation Serif", "Times New Roman", serif; letter-spacing: .018px; }
.sp { text-decoration: underline wavy #f22 1px; text-underline-offset: 1px; text-decoration-skip-ink: none; }
.shot { margin-left: 70px; }
.steps { margin-left: 108px; width: 591px; border-collapse: separate; border-spacing: 0; border: solid #000; border-width: 0 1px; font: 14.667px/16.900px "Liberation Serif", "Times New Roman", serif; letter-spacing: .015px; }
.steps th { height: 25px; background: #dfdfdf; border-top: 2px solid #777; border-bottom: 2px solid #777; text-align: left; padding: 0 0 2px 7px; line-height: 18px; }
.steps td { padding: 1px 0 0 7px; vertical-align: top; }
.steps .st { width: 84px; text-align: center; border-right: 1px solid #000; padding-left: 0; }
.vscroll { position: absolute; left: 1782px; top: 5px; width: 6px; height: 112px; border-radius: 3px; background: #8a8a8a; }

.sidebar { flex: 1; display: flex; flex-direction: column; align-items: center; position: relative; padding: 2px 0 0 2px; }
.sb { width: 36px; height: 34px; display: grid; place-items: center; margin-bottom: 8px; }
.sb svg { width: 24px; height: 24px; overflow: visible; }
.sb.menu { margin-bottom: 11px; }
.sb.sel { background: #d6d6d6; box-shadow: inset 0 0 0 1px #c2c2c2; border-radius: 6px; }
.handle { position: absolute; left: -1px; top: 409px; width: 7px; height: 73px; background: #9a9a9a; }
.handle::after { content: ""; position: absolute; left: 1px; top: 33px; border: solid transparent; border-width: 4px 0 4px 5px; border-left-color: #fff; }

.status { height: 21px; flex: none; border-top: 1px solid #b5b5b5; display: flex; align-items: center; font-size: 12.500px; line-height: 14px; white-space: nowrap; letter-spacing: -.28px; }
.status span { height: 14px; flex: none; display: flex; align-items: center; border-right: 1px solid #dcdcdc; }
.status .st0 { width: 31px; padding-left: 12px; }
.status .st1 { width: 246px; padding-left: 8px; }
.status .st2 { width: 354px; padding-left: 12px; }
.status .st3 { width: 299px; padding-left: 9px; }
.status .st4 { width: 267px; justify-content: center; padding-left: 2px; }
.status .st5 { width: 67px; }
.status .st6 { width: 29px; padding-left: 7px; }
.status .st7 { width: 29px; }
.status .st8 { width: 260px; padding-left: 6px; justify-content: center; }
.status .st9 { width: 77px; padding-left: 12px; }
.status .st10 { width: 143px; padding-left: 9px; }
.status .st11 { padding-left: 8px; border: 0; }
.pointer { position: absolute; left: 1730px; top: 974px; }
```
